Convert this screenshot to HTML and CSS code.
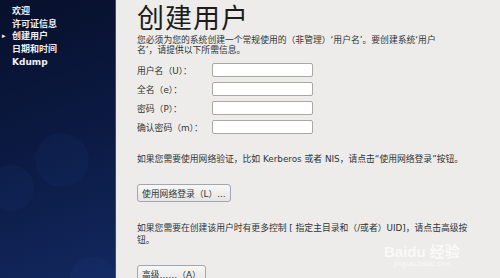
FILE: index.html
```html
<!DOCTYPE html>
<html lang="zh-CN">
<head>
    <meta charset="UTF-8">
    <title>创建用户</title>
    <link rel="stylesheet" href="styles.css">
</head>
<body>
    <div class="sidebar">
        <ul class="steps">
            <li>欢迎</li>
            <li>许可证信息</li>
            <li class="current">创建用户</li>
            <li>日期和时间</li>
            <li>Kdump</li>
        </ul>
        <div class="bubble b1"></div>
        <div class="bubble b2"></div>
        <div class="bubble b3"></div>
    </div>

    <div class="main">
        <h1>创建用户</h1>
        <p class="intro">您必须为您的系统创建一个常规使用的（非管理）‘用户名’。要创建系统‘用户<br>名’，请提供以下所需信息。</p>

        <div class="form">
            <label>用户名（U）：</label><input type="text">
            <label>全名（e）：</label><input type="text">
            <label>密码（P）：</label><input type="password">
            <label>确认密码（m）：</label><input type="password">
        </div>

        <p class="note">如果您需要使用网络验证，比如 Kerberos 或者 NIS，请点击“使用网络登录”按钮。</p>
        <button class="btn">使用网络登录（L）...</button>

        <p class="note more">如果您需要在创建该用户时有更多控制 [ 指定主目录和（/或者）UID]，请点击高级按<br>钮。</p>
        <button class="btn">高级……（A）</button>

        <div class="watermark">
            <span class="wm-logo">Bai<b>du</b> 经验</span>
            <span class="wm-url">jingyan.baidu.com</span>
        </div>
    </div>
</body>
</html>
```

FILE: styles.css
```css
body {
    margin: 0;
    height: 278px;
    overflow: hidden;
    display: flex;
    font-family: "DejaVu Sans", "Noto Sans CJK SC", sans-serif;
    background-color: #edecea;
    color: #2e3436;
}
.sidebar {
    width: 115px;
    flex-shrink: 0;
    position: relative;
    overflow: hidden;
    background: linear-gradient(160deg, #07102b 0%, #0c1b45 55%, #12285f 100%);
    border-right: 1px solid #3a4a78;
}
.steps {
    list-style: none;
    margin: 0;
    padding: 5px 0 0 12px;
    font-size: 9px;
    font-weight: bold;
    line-height: 12.7px;
    color: #f0f0f4;
}
.steps li {
    position: relative;
}
.steps .current::before {
    content: "▸";
    position: absolute;
    left: -10px;
    font-size: 7px;
}
.bubble {
    position: absolute;
    border-radius: 50%;
    background-color: rgba(40, 70, 150, 0.1);
}
.b1 { width: 54px; height: 54px; left: 35px; top: 133px; }
.b2 { width: 46px; height: 46px; left: -12px; top: 165px; }
.b3 { width: 46px; height: 46px; left: 70px; top: 256px; }
.main {
    flex: 1;
    padding: 0 0 0 21px;
    position: relative;
}
h1 {
    margin: 0;
    font-family: "Noto Sans CJK SC", sans-serif;
    font-weight: normal;
    font-size: 27px;
    line-height: 34px;
    color: #1c1c1c;
    letter-spacing: 1px;
}
.intro {
    margin: 2px 0 0 0;
    font-size: 8.8px;
    line-height: 9.5px;
}
.form {
    display: grid;
    grid-template-columns: 75px 101px;
    row-gap: 5px;
    margin-top: 8px;
    align-items: center;
    font-size: 8.8px;
}
.form input {
    height: 14px;
    box-sizing: border-box;
    border: 1px solid #a8a8a4;
    border-radius: 2px;
    background-color: #fff;
    margin: 0;
    padding: 0 2px;
}
.note {
    font-size: 8.8px;
    line-height: 12px;
    margin: 19px 0 0 0;
}
.btn {
    display: block;
    margin-top: 19px;
    height: 18px;
    padding: 0 4px;
    font-family: inherit;
    font-size: 8.8px;
    color: #2e3436;
    background: linear-gradient(#f7f7f6, #e6e5e2);
    border: 1px solid #9ea6b8;
    border-radius: 3px;
}
.more {
    margin-top: 20px;
}
.watermark {
    position: absolute;
    left: 268px;
    top: 244px;
    display: flex;
    flex-direction: column;
    align-items: center;
    color: rgba(255, 255, 255, 0.7);
    font-family: "Liberation Sans", "Noto Sans CJK SC", sans-serif;
}
.wm-logo {
    font-size: 15px;
    line-height: 16px;
    font-weight: bold;
}
.wm-url {
    font-size: 7px;
}
```
